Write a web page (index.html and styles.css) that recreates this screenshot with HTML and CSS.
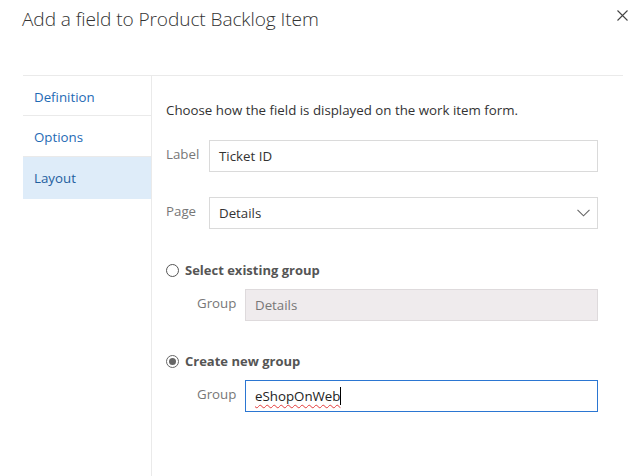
FILE: index.html
```html
<!DOCTYPE html>
<html>
<head>
<meta charset="utf-8">
<link rel="stylesheet" href="styles.css">
</head>
<body>
<div class="dialog">
  <div class="header">
    <div class="title">Add a field to Product Backlog Item</div>
    <button class="close" aria-label="Close">
      <svg width="11" height="11" viewBox="0 0 11 11"><path d="M0.5 0.5 L10.5 10.5 M10.5 0.5 L0.5 10.5" stroke="#444" stroke-width="1.1" fill="none"/></svg>
    </button>
  </div>
  <div class="body">
    <nav class="nav">
      <div class="nav-item">Definition</div>
      <div class="nav-item">Options</div>
      <div class="nav-item selected">Layout</div>
    </nav>
    <div class="content">
      <p class="intro">Choose how the field is displayed on the work item form.</p>
      <div class="row">
        <span class="lbl">Label</span>
        <div class="field">Ticket ID</div>
      </div>
      <div class="row row-page">
        <span class="lbl">Page</span>
        <div class="field select">Details
          <svg class="chev" width="13" height="8" viewBox="0 0 13 8"><path d="M0.5 0.8 L6.5 6.8 L12.5 0.8" stroke="#666" stroke-width="1.1" fill="none"/></svg>
        </div>
      </div>
      <div class="radio-row r1">
        <span class="radio"></span>
        <span class="radio-label">Select existing group</span>
      </div>
      <div class="row sub">
        <span class="lbl sublbl">Group</span>
        <div class="field disabled">Details</div>
      </div>
      <div class="radio-row r2">
        <span class="radio checked"></span>
        <span class="radio-label">Create new group</span>
      </div>
      <div class="row sub">
        <span class="lbl sublbl">Group</span>
        <div class="field focused"><span class="typo">eShopOnWeb</span><span class="caret"></span></div>
      </div>
    </div>
  </div>
</div>
</body>
</html>
```

FILE: styles.css
```css
* { box-sizing: border-box; }
html, body { margin: 0; padding: 0; background: #fff; }
body {
  font-family: "Open Sans", "Noto Sans", sans-serif;
  font-size: 13px;
  color: #333;
  width: 632px;
  height: 476px;
  overflow: hidden;
}
.dialog { display: flex; flex-direction: column; height: 476px; }
.header {
  display: flex;
  justify-content: space-between;
  align-items: flex-start;
  padding: 4px 4px 0 22px;
  height: 75px;
}
.title {
  font-size: 19.1px;
  font-weight: 300;
  color: #333;
  line-height: 30px;
  letter-spacing: -0.1px;
}
.close {
  border: 0;
  background: transparent;
  padding: 0;
  margin: 6px 0 0 0;
  width: 11px;
  height: 11px;
  display: flex;
}
.body {
  display: flex;
  flex: 1;
  margin: 0 9px 0 23px;
  border-top: 1px solid #eaeaea;
}
.nav {
  width: 129px;
  border-right: 1px solid #eaeaea;
  display: flex;
  flex-direction: column;
}
.nav-item {
  height: 41px;
  line-height: 42px;
  padding-left: 11px;
  color: #1f6bb5;
  font-size: 13.3px;
  border-bottom: 1px solid #eaeaea;
}
.nav-item:first-child { height: 40px; line-height: 42px; }
.nav-item.selected {
  background: #deecf9;
  border-bottom: 0;
  height: 42px;
  line-height: 42px;
  color: #1f5f9f;
}
.content {
  flex: 1;
  padding: 0 0 0 14px;
  margin-right: 25px;
}
.intro {
  margin: 25px 0 0 0;
  line-height: 19px;
  font-size: 13.3px;
  color: #333;
}
.row {
  display: flex;
  align-items: flex-start;
  margin-top: 20px;
}
.row-page { margin-top: 25px; }
.lbl {
  width: 43px;
  color: #777;
  font-size: 13.3px;
  line-height: 28px;
}
.sublbl { width: 48px; }
.sub { margin-left: 31px; margin-top: 9px; }
.field {
  flex: 1;
  height: 32px;
  border: 1px solid #dadada;
  padding: 0 9px;
  line-height: 30px;
  font-size: 13.3px;
  color: #333;
  display: flex;
  align-items: center;
  position: relative;
}
.select { justify-content: space-between; }
.chev { margin-right: -2px; }
.disabled {
  background: #efebed;
  border-color: #dedadc;
  color: #777;
}
.focused { border-color: #2b76d2; }
.typo {
  text-decoration: underline wavy #e23a3a;
  text-decoration-thickness: 1px;
  text-underline-offset: 3px;
  color: #222;
}
.caret {
  display: inline-block;
  width: 1px;
  height: 18px;
  background: #000;
  margin-left: 0;
}
.radio-row {
  display: flex;
  align-items: center;
  gap: 6px;
  height: 20px;
  margin-top: 31px;
}
.r2 { margin-top: 30px; }
.radio {
  width: 13px;
  height: 13px;
  border: 1px solid #555;
  border-radius: 50%;
  background: #fff;
  display: inline-block;
  position: relative;
}
.radio.checked { border-color: #666; }
.radio.checked::after {
  content: "";
  position: absolute;
  left: 2px; top: 2px;
  width: 7px; height: 7px;
  border-radius: 50%;
  background: #666;
}
.radio-label {
  font-weight: 700;
  color: #555;
  font-size: 13px;
}
```
